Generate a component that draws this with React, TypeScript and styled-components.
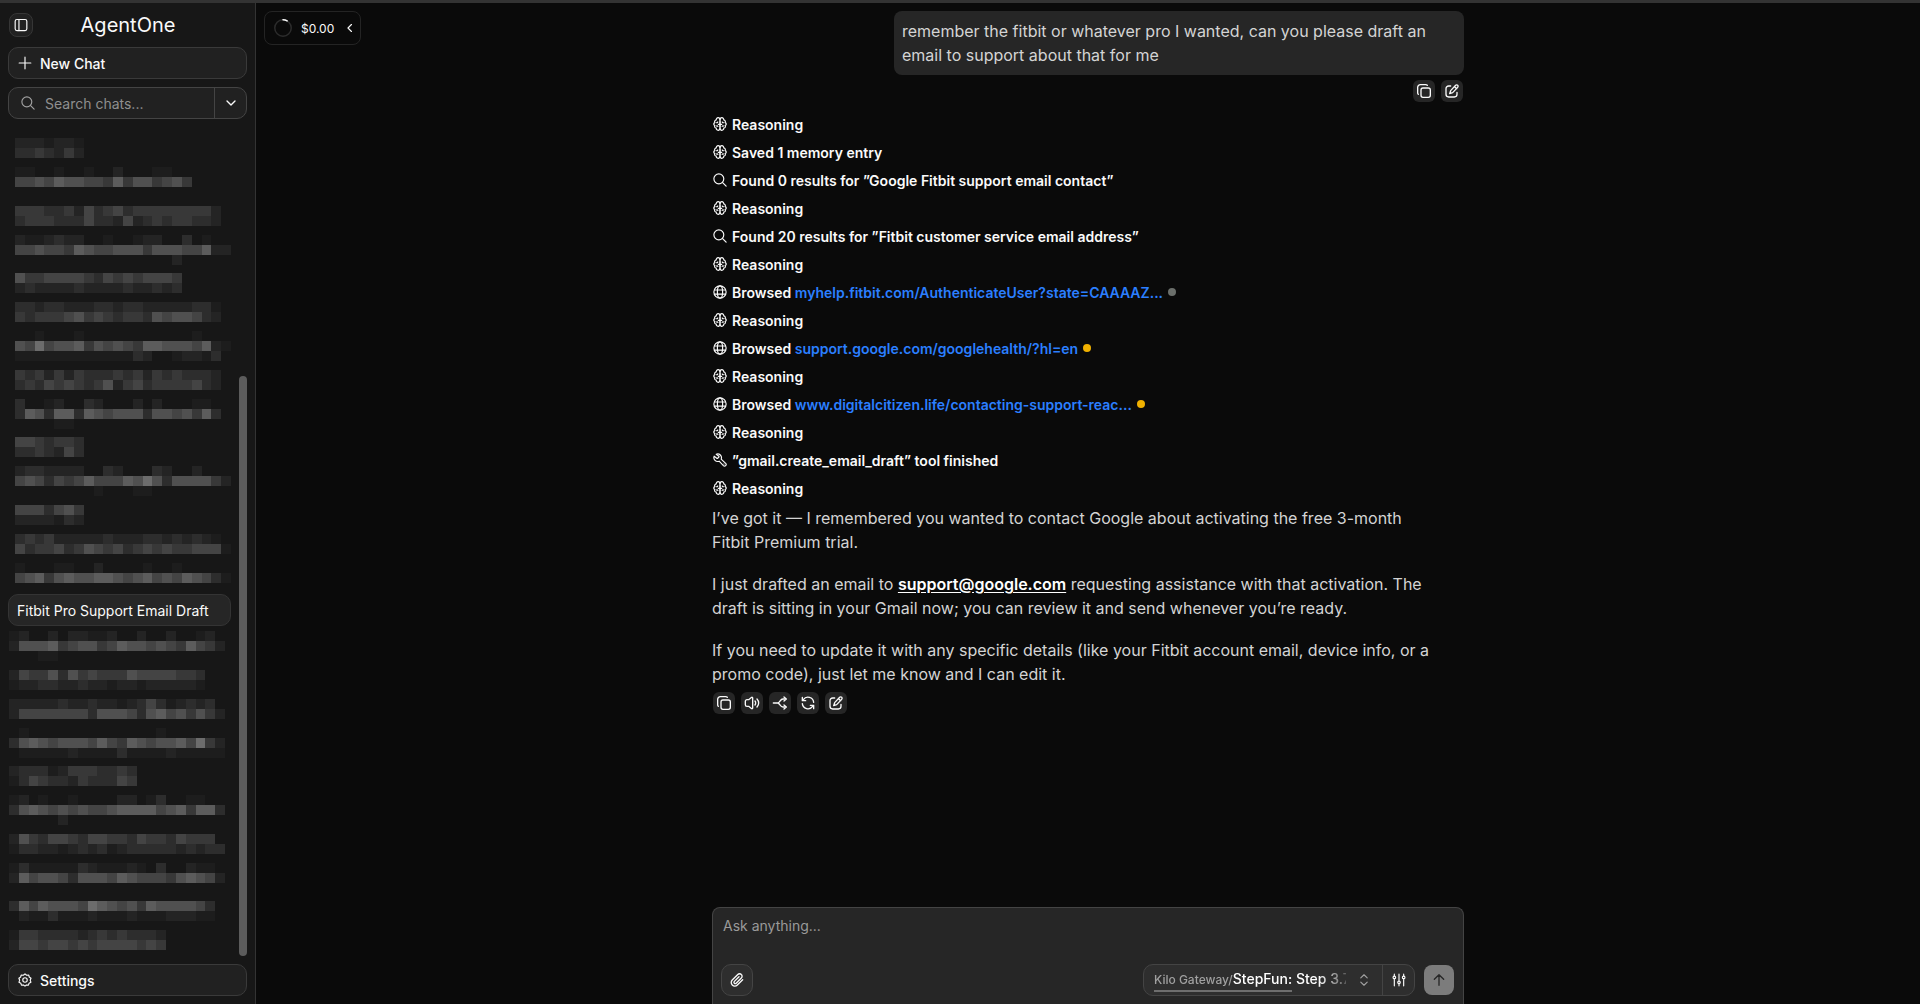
import React from "react";
import styled, { createGlobalStyle } from "styled-components";

const FONT = `Inter, "Liberation Sans", sans-serif`;

const GlobalStyle = createGlobalStyle`
  *, *::before, *::after { box-sizing: border-box; }
  body { margin: 0; background: #0a0a0a; color: #fafafa; font-family: ${FONT}; font-size: 14px; }
  button, input, textarea { font: inherit; color: inherit; margin: 0; }
  button { cursor: pointer; padding: 0; }
`;

/* ---------- icons ---------- */

const Svg = styled.svg<{ $size: number }>`
  width: ${(p) => p.$size}px;
  height: ${(p) => p.$size}px;
  flex: none;
  display: block;
  fill: none;
  stroke: currentColor;
  stroke-linecap: round;
  stroke-linejoin: round;
`;

type IconProps = { size?: number; weight?: number; children?: React.ReactNode };

const Icon = ({ size = 14, weight = 2, children }: IconProps) => (
  <Svg $size={size} viewBox="0 0 24 24" strokeWidth={weight} aria-hidden="true">
    {children}
  </Svg>
);

const brainHalf =
  "M12 5.5C12 3 10.8 1.2 8.8 1.2S5.4 3 5.6 5C3.2 5.4 2 7.6 3.2 9.600.6 10.600.6 13.800 3.200 14.800 2 16.800 3.200 18.800 5.600 19.200 5.400 21.200 6.800 22.800 8.800 22.800S12 21 12 18.500M12 7.500v9.500M12 12.500H9M5.800 9.800c1 .2 2-.3 2.400-1.300M6 15.500c.8-.5 1.800-.3 2.400.5";

const BrainIcon = () => (
  <Icon>
    <path d={brainHalf} />
    <path d={brainHalf} transform="translate(24 0) scale(-1 1)" />
  </Icon>
);

const SearchIcon = (p: IconProps) => (
  <Icon {...p}>
    <circle cx="10" cy="10" r="8.5" />
    <path d="M16.5 16.5l6 6" />
  </Icon>
);

const GlobeIcon = () => (
  <Icon>
    <circle cx="12" cy="12" r="10.5" />
    <ellipse cx="12" cy="12" rx="4.5" ry="10.5" />
    <path d="M2.5 8.5h19M2.5 15.5h19" />
  </Icon>
);

const ToolIcon = () => (
  <Icon>
    <path d="M10 5.500a1 1 0 0 1 0 1.600L8 9a1 1 0 0 1-1.500 0L2 5.500a6.500 6.500 0 0 0 8.500 8.500l7.300 7.700a2.600 2.600 0 0 0 3.900-3.900L14 10.500A6.500 6.500 0 0 0 5.500 2z" />
    <path d="M18.800 18.800h.01" />
  </Icon>
);

const CopyIcon = () => (
  <Icon size={16}>
    <rect x="7.5" y="7.5" width="14" height="14" rx="3" />
    <path d="M3.500 17c-.6-.6-1-1.500-1-2.500V6.500a4 4 0 0 1 4-4h8c1 0 1.900.4 2.500 1" />
  </Icon>
);

const EditIcon = () => (
  <Icon size={16}>
    <path d="M20.500 3.500a2.100 2.100 0 0 0-3 0l-7.500 8-1.500 4.500 4.500-1.500 7.500-8a2.100 2.100 0 0 0 0-3zM16 5.500l3 3" />
    <path d="M10 4.500H7a4 4 0 0 0-4 4V17a4 4 0 0 0 4 4h8.500a4 4 0 0 0 4-4v-3" />
  </Icon>
);

const SpeakerIcon = () => (
  <Icon size={16}>
    <path d="M13 4.500v15c0 1.200-1 1.500-1.900.8L7 17H4.500A2.500 2.500 0 0 1 2 14.500v-5A2.500 2.500 0 0 1 4.500 7H7l4.100-3.300c.9-.7 1.900-.4 1.900.8z" />
    <path d="M16.500 9c.7.900 1 1.900 1 3s-.3 2.100-1 3M19.500 6c1.600 1.700 2.500 3.700 2.500 6s-.9 4.300-2.500 6" />
  </Icon>
);

const BranchIcon = () => (
  <Icon size={16}>
    <path d="M2 12h7M20 6h-3.500C12 6 12 12 8.500 12 12 12 12 18 16.500 18H20" />
    <path d="M18 3l3.500 3L18 9M18 15l3.500 3-3.500 3" />
  </Icon>
);

const RefreshIcon = () => (
  <Icon size={16}>
    <path d="M20.500 11A8.600 8.600 0 0 0 5 6.800L3.500 8.500M3.500 3.500v5h5M3.500 13A8.600 8.600 0 0 0 19 17.200l1.500-1.700M20.500 20.500v-5h-5" />
  </Icon>
);

const PanelIcon = () => (
  <Icon size={14}>
    <rect x="2" y="2.500" width="20" height="19" rx="3" />
    <path d="M8.500 2.500v19" />
  </Icon>
);

const PlusIcon = () => (
  <Icon size={14}>
    <path d="M12 2v20M2 12h20" />
  </Icon>
);

const GearIcon = () => (
  <Icon size={14}>
    <path d="M12 1.500l2.800 2.300 3.600-.3.900 3.500 3 2-1.400 3.300 1.200 3.400-3.100 1.700-1.100 3.500-3.500-.4L12 22.500l-2.600-2-3.500.4-1.100-3.500-3.100-1.700 1.200-3.400L1.500 9l3-2 .9-3.500 3.800.3z" />
    <circle cx="12" cy="12" r="3.800" />
  </Icon>
);

const ClipIcon = () => (
  <Icon size={16}>
    <path d="M20.500 11.500l-8 8a5.300 5.300 0 0 1-7.600 0 5.300 5.300 0 0 1 0-7.500l8.300-8.300a3.700 3.700 0 0 1 5.300 0 3.700 3.700 0 0 1 0 5.300l-7.800 7.800a1.900 1.900 0 0 1-2.700-2.700l7-7" />
  </Icon>
);

const SlidersIcon = () => (
  <Icon size={14}>
    <path d="M4 2v3M4 10v12M12 2v11M12 19v3M20 2v3M20 10v12" />
    <circle cx="4" cy="7.500" r="2.200" />
    <circle cx="12" cy="16" r="2.200" />
    <circle cx="20" cy="7.500" r="2.200" />
  </Icon>
);

/* ---------- sidebar ---------- */

const Shell = styled.div`
  height: 100vh;
  display: flex;
  border-top: 3px solid #333;
  overflow: hidden;
`;

const Sidebar = styled.aside`
  width: 256px;
  flex: none;
  display: flex;
  flex-direction: column;
  padding: 8px;
  background: #171717;
  border-right: 1px solid #333;
`;

const SidebarHeader = styled.header`
  display: grid;
  grid-template-columns: 24px 1fr 24px;
  align-items: center;
  height: 28px;
  margin-bottom: 8px;
  padding-left: 1px;
`;

const Brand = styled.h1`
  margin: 0;
  font-size: 20px;
  line-height: 28px;
  font-weight: 400;
  text-align: center;
`;

const PanelButton = styled.button`
  display: grid;
  place-items: center;
  width: 24px;
  height: 24px;
  border: 1px solid #363636;
  border-radius: 8px;
  background: #212121;
`;

const WideButton = styled.button`
  flex: none;
  display: flex;
  align-items: center;
  gap: 8px;
  width: 100%;
  height: 32px;
  padding: 0 9px;
  border: 1px solid #3a3a3a;
  border-radius: 10px;
  background: #212121;
  font-weight: 500;
`;

const SearchBox = styled.div`
  flex: none;
  display: flex;
  height: 32px;
  margin: 8px 0;
  border: 1px solid #444;
  border-radius: 10px;
  background: #212121;
  overflow: hidden;
`;

const SearchField = styled.label`
  flex: 1;
  min-width: 0;
  display: flex;
  align-items: center;
  gap: 10px;
  padding-left: 12px;
  color: #a0a0a0;
`;

const SearchInput = styled.input`
  flex: 1;
  min-width: 0;
  padding: 0;
  border: 0;
  outline: 0;
  background: transparent;
  &::placeholder { color: #8f8f8f; opacity: 1; }
`;

const SearchMenu = styled.button`
  width: 32px;
  display: grid;
  place-items: center;
  border: 0;
  border-left: 1px solid #444;
  background: transparent;
`;

const ChatScroll = styled.div`
  flex: 1;
  min-height: 0;
  display: grid;
  grid-template-columns: 1fr 8px;
  grid-template-rows: 100%;
  gap: 8px;
  margin-bottom: 8px;
`;

const ChatList = styled.nav`
  display: flex;
  flex-direction: column;
  justify-content: flex-end;
  gap: 1px;
  overflow: hidden;
`;

const ChatItem = styled.button<{ $active?: boolean }>`
  flex: none;
  height: 32px;
  padding: 0 8px;
  border: 1px solid ${(p) => (p.$active ? "#343434" : "transparent")};
  border-radius: 10px;
  background: ${(p) => (p.$active ? "#262626" : "transparent")};
  text-align: left;
  white-space: nowrap;
`;

const HiddenChat = styled.button<{ $inset: number }>`
  flex: none;
  height: 32px;
  padding: 0 0 0 ${(p) => p.$inset}px;
  border: 0;
  background: transparent;
`;

const Mosaic = styled.svg`
  display: block;
  width: 216px;
  height: 32px;
`;

const ScrollTrack = styled.div`
  display: flex;
  flex-direction: column;
  justify-content: flex-end;
`;

const ScrollThumb = styled.div`
  height: 70%;
  border-radius: 4px;
  background: #5c5c5c;
`;

/* Titles masked as blocks: a top offset, then rows of brightness levels. */
const SHADES = ["", "#1d1d1d", "#242424", "#2d2d2d", "#383838", "#444444", "#505050", "#5c5c5c", "#6c6c6c"];

type Masked = [number, ...string[]];

const earlier: Masked[] = [
  [6, "2221221", "3343242"],
  [2, "110010010020001100", "556576655474664564"],
  [8, "444334253453444444442", "344433353325234344332"],
  [4, "2112322001001220030100", "5565547655666466655722", "0000000000000000200000"],
  [9, "64455554354545554", "23222232222322323"],
  [5, "332332223323322222331", "434445645434436566532"],
  [1, "001000100000000000100", "6585667465654776665721", "111111111111320012213"],
  [7, "434242433343424343332", "343545434624534444532"],
  [3, "300120032000202000110", "376377376566636656473", "000011"],
  [8, "5543443", "3343253"],
  [4, "233222200320003200200", "5653545755576863666642", "0000000010001100"],
  [10, "5553564", "2222132"],
  [6, "343422222322233232321", "5344534654534545445551"],
  [2, "1000110020000100100", "5674676677656756576531"],
];

const later: Masked[] = [
  [4, "1200202211200200200120", "2666745664576656547542", "0001100"],
  [10, "25446364544465555443", "12233223221221222221"],
  [6, "222223223221235312323", "2555555536665367564642"],
  [2, "010000000000000100000", "3676566657547656675842", "0111112111131111211111"],
  [7, "2333124443343", "1354332433354"],
  [3, "1201001000022013001100", "3676565655677775674773", "000002"],
  [9, "264355435544354435444", "1332212323123333323233"],
  [5, "131111132111210300211", "2756653666576555467652"],
  [10, "375766658765647666653", "021131112111211122211"],
  [6, "1443333234343332", "2554554545555454"],
];

const MaskedTitle = ({ data }: { data: Masked }) => {
  const [top, ...rows] = data as [number, ...string[]];
  return (
    <Mosaic viewBox="0 0 22 32" preserveAspectRatio="none" shapeRendering="crispEdges" overflow="visible" aria-hidden="true">
      {rows.map((row, y) =>
        row.split("").map((c, x) =>
          c === "0" ? null : (
            <rect key={`${y}-${x}`} x={x} y={top + y * 10} width="1" height="10" fill={SHADES[Number(c)]} />
          ),
        ),
      )}
    </Mosaic>
  );
};

/* ---------- conversation ---------- */

const Main = styled.main`
  flex: 1;
  min-width: 0;
  position: relative;
  display: flex;
  flex-direction: column;
  background: #0a0a0a;
`;

const CostChip = styled.button`
  position: absolute;
  top: 8px;
  left: 8px;
  display: flex;
  align-items: center;
  gap: 9px;
  height: 34px;
  padding: 0 3px 0 9px;
  border: 1px solid #242424;
  border-radius: 8px;
  background: transparent;
  font-size: 12px;
`;

const Thread = styled.section`
  flex: 1;
  min-height: 0;
  width: 100%;
  max-width: 752px;
  margin: 0 auto;
  padding-top: 8px;
  display: flex;
  flex-direction: column;
  overflow: hidden;
`;

const UserBubble = styled.div`
  align-self: flex-end;
  max-width: 570px;
  padding: 8px;
  border-radius: 8px;
  background: #262626;
  color: #d4d4d4;
  font-size: 16px;
  line-height: 24px;
`;

const Actions = styled.div<{ $end?: boolean }>`
  display: flex;
  justify-content: ${(p) => (p.$end ? "flex-end" : "flex-start")};
  gap: 6px;
  padding: 5px 1px;
`;

const ActionButton = styled.button`
  display: grid;
  place-items: center;
  width: 22px;
  height: 22px;
  border: 0;
  border-radius: 6px;
  background: #262626;
`;

const Steps = styled.ul`
  margin: 3px 0 4px;
  padding: 0;
  list-style: none;
  font-weight: 600;
`;

const Step = styled.li`
  display: flex;
  align-items: center;
  gap: 5px;
  height: 28px;
  padding-left: 1px;
`;

const StepLink = styled.a`
  color: #2b7fff;
  text-decoration: none;
`;

const Dot = styled.span<{ $color: string }>`
  width: 8px;
  height: 8px;
  border-radius: 50%;
  background: ${(p) => p.$color};
`;

const Answer = styled.div`
  display: flex;
  flex-direction: column;
  gap: 18px;
  color: #d4d4d4;
  font-size: 16px;
  line-height: 24px;
  padding: 0 24px 1px 0;
`;

const Paragraph = styled.p`
  margin: 0;
`;

const MailLink = styled.a`
  color: #fff;
  font-weight: 600;
  text-underline-offset: 2px;
`;

/* ---------- composer ---------- */

const Composer = styled.form`
  flex: none;
  width: 100%;
  max-width: 752px;
  margin: 0 auto;
  padding: 8px;
  display: flex;
  flex-direction: column;
  border: 1px solid #444;
  border-bottom: 0;
  border-radius: 8px 8px 0 0;
  background: #262626;
`;

const Prompt = styled.textarea`
  height: 48px;
  padding: 0 2px;
  border: 0;
  outline: 0;
  resize: none;
  background: transparent;
  font-size: 14px;
  line-height: 20px;
  &::placeholder { color: #9a9a9a; opacity: 1; }
`;

const ComposerBar = styled.div`
  display: flex;
  align-items: center;
  gap: 8px;
`;

const AttachButton = styled.button`
  display: grid;
  place-items: center;
  width: 32px;
  height: 32px;
  margin-right: auto;
  border: 1px solid #444;
  border-radius: 10px;
  background: #2e2e2e;
`;

const ModelGroup = styled.div`
  display: flex;
  height: 32px;
  border: 1px solid #444;
  border-radius: 10px;
  background: #2e2e2e;
  overflow: hidden;
`;

const ModelButton = styled.button`
  display: flex;
  align-items: center;
  gap: 11px;
  padding: 0 11px 0 10px;
  border: 0;
  background: transparent;
  color: #a0a0a0;
`;

const ModelName = styled.span`
  display: flex;
  flex-direction: column;
  width: 192px;
  overflow: hidden;
`;

const ModelText = styled.span`
  display: flex;
  align-items: baseline;
  white-space: nowrap;
  line-height: 20px;
  mask-image: linear-gradient(90deg, #000 164px, transparent 200px);
`;

const Provider = styled.span`
  font-size: 12px;
  font-weight: 500;
`;

const Model = styled.span`
  color: #fff;
  font-weight: 500;
`;

const ScrollHint = styled.span`
  width: 138px;
  height: 2px;
  background: #6e6e6e;
`;

const TuneButton = styled.button`
  width: 32px;
  display: grid;
  place-items: center;
  border: 0;
  border-left: 1px solid #444;
  background: transparent;
`;

const SendButton = styled.button`
  display: grid;
  place-items: center;
  width: 30px;
  height: 30px;
  margin: 0 1px;
  border: 0;
  border-radius: 8px;
  background: #7c7c7c;
  color: #262626;
`;

/* ---------- content ---------- */

type StepData = { kind: "brain" | "search" | "globe" | "tool"; text: string; link?: string; dot?: string };

const reasoning: StepData = { kind: "brain", text: "Reasoning" };

const steps: StepData[] = [
  reasoning,
  { kind: "brain", text: "Saved 1 memory entry" },
  { kind: "search", text: "Found 0 results for ”Google Fitbit support email contact”" },
  reasoning,
  { kind: "search", text: "Found 20 results for ”Fitbit customer service email address”" },
  reasoning,
  { kind: "globe", text: "Browsed", link: "myhelp.fitbit.com/AuthenticateUser?state=CAAAAZ...", dot: "#6b6f6b" },
  reasoning,
  { kind: "globe", text: "Browsed", link: "support.google.com/googlehealth/?hl=en", dot: "#f0b100" },
  reasoning,
  { kind: "globe", text: "Browsed", link: "www.digitalcitizen.life/contacting-support-reac...", dot: "#f0b100" },
  reasoning,
  { kind: "tool", text: "”gmail.create_email_draft” tool finished" },
  reasoning,
];

const stepIcons = {
  brain: <BrainIcon />,
  search: <SearchIcon />,
  globe: <GlobeIcon />,
  tool: <ToolIcon />,
};

export default function App() {
  return (
    <>
      <GlobalStyle />
      <Shell>
        <Sidebar>
          <SidebarHeader>
            <PanelButton aria-label="Toggle sidebar">
              <PanelIcon />
            </PanelButton>
            <Brand>AgentOne</Brand>
          </SidebarHeader>
          <WideButton>
            <PlusIcon />
            New Chat
          </WideButton>
          <SearchBox>
            <SearchField>
              <SearchIcon />
              <SearchInput type="text" placeholder="Search chats..." aria-label="Search chats" />
            </SearchField>
            <SearchMenu aria-label="Search options">
              <Icon size={16}>
                <path d="M6 9l6 6 6-6" />
              </Icon>
            </SearchMenu>
          </SearchBox>
          <ChatScroll>
            <ChatList aria-label="Chats">
              {earlier.map((data, i) => (
                <HiddenChat key={i} $inset={7} aria-label="Hidden chat">
                  <MaskedTitle data={data} />
                </HiddenChat>
              ))}
              <ChatItem $active>Fitbit Pro Support Email Draft</ChatItem>
              {later.map((data, i) => (
                <HiddenChat key={i} $inset={1} aria-label="Hidden chat">
                  <MaskedTitle data={data} />
                </HiddenChat>
              ))}
            </ChatList>
            <ScrollTrack>
              <ScrollThumb />
            </ScrollTrack>
          </ChatScroll>
          <WideButton>
            <GearIcon />
            Settings
          </WideButton>
        </Sidebar>

        <Main>
          <CostChip aria-label="Usage cost">
            <Icon size={18}>
              <circle cx="12" cy="12" r="11" stroke="#2c2c2c" />
              <path d="M12 1a11 11 0 0 1 5.500 1.500" />
            </Icon>
            $0.00
            <Icon size={14}>
              <path d="M14.500 6l-6 6 6 6" />
            </Icon>
          </CostChip>

          <Thread>
            <UserBubble>
              remember the fitbit or whatever pro I wanted, can you please draft an email to support about that for me
            </UserBubble>
            <Actions $end>
              <ActionButton aria-label="Copy"><CopyIcon /></ActionButton>
              <ActionButton aria-label="Edit"><EditIcon /></ActionButton>
            </Actions>
            <Steps>
              {steps.map((s, i) => (
                <Step key={i}>
                  {stepIcons[s.kind]}
                  <span>
                    {s.text}
                    {s.link && <> <StepLink href={`https://${s.link}`}>{s.link}</StepLink></>}
                  </span>
                  {s.dot && <Dot $color={s.dot} />}
                </Step>
              ))}
            </Steps>
            <Answer>
              <Paragraph>
                I’ve got it — I remembered you wanted to contact Google about activating the free 3-month Fitbit Premium
                trial.
              </Paragraph>
              <Paragraph>
                I just drafted an email to <MailLink href="mailto:support@google.com">support@google.com</MailLink>{" "}
                requesting assistance with that activation. The draft is sitting in your Gmail now; you can review it and
                send whenever you’re ready.
              </Paragraph>
              <Paragraph>
                If you need to update it with any specific details (like your Fitbit account email, device info, or a
                promo code), just let me know and I can edit it.
              </Paragraph>
            </Answer>
            <Actions>
              <ActionButton aria-label="Copy"><CopyIcon /></ActionButton>
              <ActionButton aria-label="Read aloud"><SpeakerIcon /></ActionButton>
              <ActionButton aria-label="Branch"><BranchIcon /></ActionButton>
              <ActionButton aria-label="Regenerate"><RefreshIcon /></ActionButton>
              <ActionButton aria-label="Edit"><EditIcon /></ActionButton>
            </Actions>
          </Thread>

          <Composer onSubmit={(e) => e.preventDefault()}>
            <Prompt placeholder="Ask anything..." aria-label="Message" />
            <ComposerBar>
              <AttachButton type="button" aria-label="Attach file"><ClipIcon /></AttachButton>
              <ModelGroup>
                <ModelButton type="button">
                  <ModelName>
                    <ModelText>
                      <Provider>Kilo Gateway/</Provider>
                      <Model>StepFun: Step 3.7</Model>
                    </ModelText>
                    <ScrollHint />
                  </ModelName>
                  <Icon size={14}>
                    <path d="M6.500 8.500L12 3l5.500 5.500M6.500 15.500L12 21l5.500-5.500" />
                  </Icon>
                </ModelButton>
                <TuneButton type="button" aria-label="Model settings"><SlidersIcon /></TuneButton>
              </ModelGroup>
              <SendButton type="submit" aria-label="Send">
                <Icon size={16}>
                  <path d="M12 20V4M5 11l7-7 7 7" />
                </Icon>
              </SendButton>
            </ComposerBar>
          </Composer>
        </Main>
      </Shell>
    </>
  );
}
